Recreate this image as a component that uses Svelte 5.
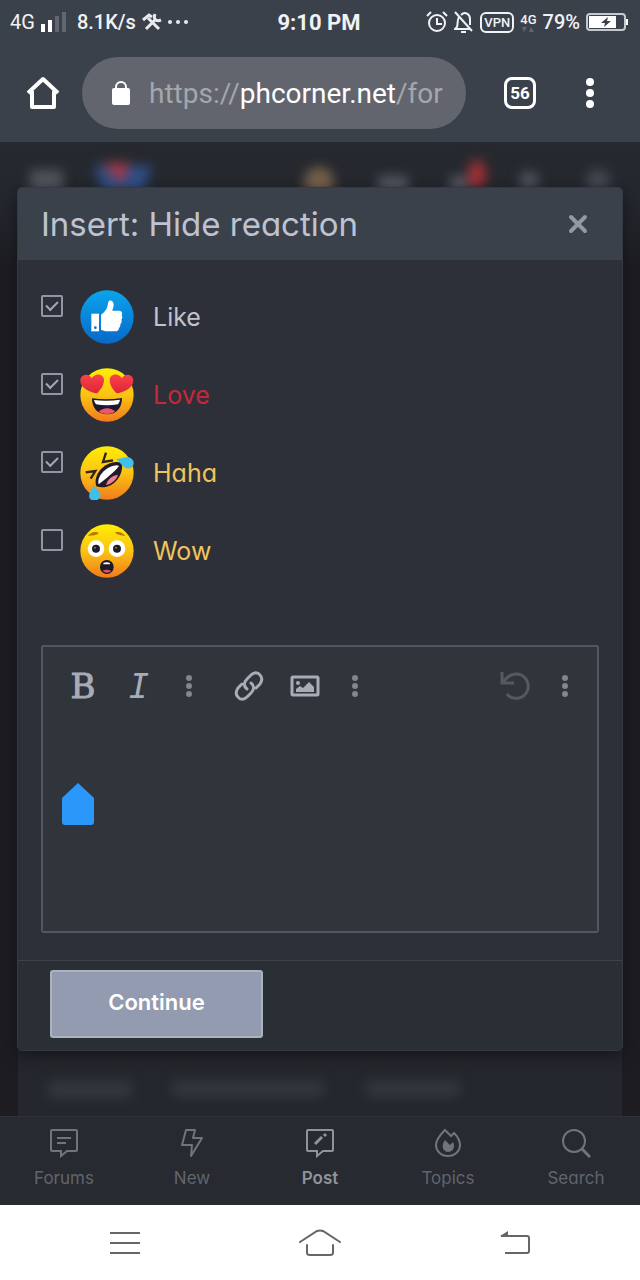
<script>
  let reactions = $state([
    { id: 'like', label: 'Like', checked: true },
    { id: 'love', label: 'Love', checked: true },
    { id: 'haha', label: 'Haha', checked: true },
    { id: 'wow', label: 'Wow', checked: false },
  ]);

  let message = $state('');

  const tabs = [
    { id: 'forums', label: 'Forums' },
    { id: 'new', label: 'New' },
    { id: 'post', label: 'Post', active: true },
    { id: 'topics', label: 'Topics' },
    { id: 'search', label: 'Search' },
  ];
</script>

{#snippet dots()}
  <svg width="8" height="24" viewBox="0 0 8 24" fill="currentColor">
    <circle cx="4" cy="4" r="3" />
    <circle cx="4" cy="12" r="3" />
    <circle cx="4" cy="20" r="3" />
  </svg>
{/snippet}

{#snippet face(id)}
  <svg class="face" viewBox="0 0 162 162" aria-hidden="true">
    {#if id === 'like'}
      <circle cx="81" cy="81" r="80" fill="url(#blue)" />
      <path d="M34 71h23v53H34z" fill="#fff" />
      <circle cx="46" cy="113" r="4" fill="#0b6fc4" />
      <path
        d="M63 74C71 69 79 60 82 51c2-7 1-14 5-18 6-4 14 2 14 11 0 7-3 12-4 18h20c8 0 12 7 8 14 3 5 2 10-1 13 2 5 1 10-3 13 1 5-1 9-4 12 0 7-5 10-12 10H82c-8 0-13-3-19-4z"
        fill="#fff"
      />
    {:else if id === 'love'}
      <circle cx="81" cy="81" r="80" fill="url(#yellow)" />
      <path d="M51 76C31 73 1 61 1 38c0-19 24-25 34-7 11-19 37-13 37 5 0 17-12 31-21 40z" fill="url(#red)" />
      <path d="M110 76c20-3 50-15 50-38 0-19-24-25-34-7-11-19-37-13-37 5 0 17 12 31 21 40z" fill="url(#red)" />
      <path d="M36 91q45 6 90-1c0 29-16 49-45 49s-45-19-45-48z" fill="#1d1b2a" />
      <path d="M42 96q39 5 78-1-1 9-6 14-34 6-66 0-5-6-6-13z" fill="#fff" />
      <path d="M57 131c10-14 39-14 48 0-14 9-35 9-48 0z" fill="#ee5575" />
    {:else if id === 'haha'}
      <circle cx="81" cy="81" r="80" fill="url(#yellow)" />
      <path d="M17 79l29-4-14 23M78 20l-9 28 30-5" fill="none" stroke="#32231f" stroke-width="7" />
      <path d="M49 121C36 82 82 38 125 50c9 40-32 86-76 71z" fill="#211b29" />
      <path d="M55 111c-2-25 27-52 57-53l5 2c-13 17-38 37-61 55z" fill="#fff" />
      <path d="M78 117c4-16 17-28 36-31-4 14-18 28-36 31z" fill="#f27b91" />
      <path d="M108 39c12 1 23-8 37-5 19 3 21 25 7 32-20 7-29-16-44-27z" fill="#42bfe8" />
      <path d="M40 116c-1 12-15 23-12 38 4 14 27 12 33-1 5-17-15-24-21-37z" fill="#42bfe8" />
    {:else}
      <circle cx="81" cy="81" r="80" fill="url(#yellow)" />
      <path d="M24 36c7-11 20-15 32-10-5 9-18 7-32 10zM105 25c13-4 25 1 31 12-13-5-25-2-31-12z" fill="#bd7300" />
      <circle cx="48" cy="74" r="25" fill="#fff" />
      <circle cx="111" cy="74" r="25" fill="#fff" />
      <circle cx="48" cy="74" r="12" fill="#1c1d27" />
      <circle cx="111" cy="74" r="12" fill="#1c1d27" />
      <circle cx="45" cy="71" r="3" fill="#777" />
      <circle cx="108" cy="71" r="3" fill="#777" />
      <rect x="60" y="108" width="41" height="42" rx="20" fill="#1b1925" />
      <path d="M70 117q10-5 20 0v4H70z" fill="#fff" />
      <path d="M67 141q13-8 27 0-12 10-27 0z" fill="#e84864" />
    {/if}
  </svg>
{/snippet}

<svg class="defs" width="0" height="0" aria-hidden="true">
  <defs>
    <linearGradient id="blue" x2="0" y2="1">
      <stop stop-color="#0ba4ed" />
      <stop offset="1" stop-color="#0868c8" />
    </linearGradient>
    <linearGradient id="yellow" x2="0" y2="1">
      <stop stop-color="#fdee05" />
      <stop offset=".5" stop-color="#fbc313" />
      <stop offset="1" stop-color="#f07b1c" />
    </linearGradient>
    <linearGradient id="red" x2="0" y2="1">
      <stop stop-color="#fa4448" />
      <stop offset="1" stop-color="#dd2437" />
    </linearGradient>
  </defs>
</svg>

<div class="screen">
  <div class="status">
    <div class="statusSide">
      <span class="network">4G</span>
      <svg width="26" height="20" viewBox="0 0 26 20" fill="#fff">
        <path d="M0 12h4v8H0zM7 8h4v12H7z" />
        <path d="M14 4h4v16h-4zM21 0h4v20h-4z" opacity=".2" />
      </svg>
      <span class="speed">8.1K/s</span>
      <svg width="20" height="18" viewBox="0 0 20 18" fill="none" stroke="#e8eaee">
        <path d="M6 5l11 11M13 7L4 16" stroke-width="3" />
        <path d="M1 7l6-5 3 2" stroke-width="3" />
        <path d="M13 1c-2 5 1 8 6 6" stroke-width="3" />
      </svg>
      <svg width="20" height="4" viewBox="0 0 20 4" fill="#e8eaee">
        <circle cx="2" cy="2" r="2" /><circle cx="10" cy="2" r="2" /><circle cx="18" cy="2" r="2" />
      </svg>
    </div>
    <time>9:10 PM</time>
    <div class="statusSide end">
      <svg width="22" height="22" viewBox="0 0 22 22" fill="none" stroke="#f0f2f5" stroke-width="2">
        <circle cx="11" cy="12" r="8" />
        <path d="M11 7v6h5M1 5l4-4M21 5l-4-4" />
      </svg>
      <svg width="20" height="22" viewBox="0 0 20 22" fill="none" stroke="#f0f2f5" stroke-width="2">
        <path d="M5 6c-2 3-1 7-2 10l-2 2h15M7 4c4-4 9-1 9 4v6M1 1l17 19" />
        <path d="M7 21h5" />
      </svg>
      <span class="vpn">VPN</span>
      <span class="data">
        4G
        <svg width="12" height="5" viewBox="0 0 12 5" fill="#616771"><path d="M0 0h5L2 5zM7 5h5L9 0z" /></svg>
      </span>
      <span class="percent">79%</span>
      <svg width="42" height="18" viewBox="0 0 42 18">
        <rect x="1" y="1" width="38" height="16" rx="3" fill="none" stroke="#c6cad0" stroke-width="2" />
        <path d="M3 3h27v12H3zM40 6h2v6h-2z" fill="#fff" />
        <path d="M22 4l-7 6h4l-1 4 7-6h-4z" fill="#3a404a" />
      </svg>
    </div>
  </div>

  <header class="browser">
    <button class="home" aria-label="Home">
      <svg width="34" height="34" viewBox="0 0 34 34" fill="none" stroke="#fff" stroke-width="4" stroke-linejoin="round">
        <path d="M2 17L17 3l15 14M6 15v16h22V15" />
      </svg>
    </button>
    <a class="address" href="#url">
      <svg width="18" height="24" viewBox="0 0 18 24">
        <rect y="7" width="18" height="17" rx="2" fill="#fff" />
        <path d="M4 8V6a5 5 0 0 1 10 0v2" fill="none" stroke="#fff" stroke-width="2" />
      </svg>
      <span class="url">https://<b>phcorner.net</b>/for</span>
    </a>
    <button class="count" aria-label="Open tabs">56</button>
    <button class="more" aria-label="Menu">
      <svg width="8" height="30" viewBox="0 0 8 30" fill="#fff">
        <circle cx="4" cy="4" r="4" /><circle cx="4" cy="15" r="4" /><circle cx="4" cy="26" r="4" />
      </svg>
    </button>
  </header>

  <main>
    <svg class="strip top" viewBox="0 0 640 46" preserveAspectRatio="none" aria-hidden="true">
      <g class="blurred">
        <rect x="30" y="28" width="33" height="24" fill="#50545b" />
        <path d="M94 24h58l-10 28h-38z" fill="#304f88" />
        <path d="M103 21h27l-9 22z" fill="#a93847" />
        <circle cx="319" cy="40" r="15" fill="#76604b" />
        <rect x="378" y="34" width="30" height="17" fill="#555763" />
        <rect x="450" y="34" width="18" height="17" fill="#555763" />
        <ellipse cx="477" cy="33" rx="9" ry="15" fill="#a22f36" />
        <circle cx="529" cy="39" r="10" fill="#50525d" />
        <circle cx="598" cy="39" r="12" fill="#444951" />
      </g>
    </svg>

    <div class="dialog" role="dialog" aria-labelledby="title">
      <div class="dialogHeader">
        <h1 id="title">Insert: Hide reaction</h1>
        <button class="close" aria-label="Close">
          <svg width="20" height="20" viewBox="0 0 20 20" stroke="currentColor" stroke-width="4" stroke-linecap="round">
            <path d="M3 3l14 14M17 3L3 17" />
          </svg>
        </button>
      </div>

      <div class="dialogBody">
        <ul class="reactions">
          {#each reactions as reaction (reaction.id)}
            <li>
              <label class={reaction.id}>
                <input type="checkbox" bind:checked={reaction.checked} />
                {@render face(reaction.id)}
                <span>{reaction.label}</span>
              </label>
            </li>
          {/each}
        </ul>

        <div class="editor">
          <div class="tools">
            <button class="bold" aria-label="Bold">B</button>
            <button class="italic" aria-label="Italic">I</button>
            <button class="narrow" aria-label="More text options">{@render dots()}</button>
            <button class="group" aria-label="Insert link">
              <svg width="30" height="30" viewBox="0 0 30 30" fill="none" stroke="currentColor" stroke-width="3" stroke-linecap="round">
                <path d="M13 18c-4-3-3-7 0-10l4-4c3-3 7-3 9 0 3 3 2 6 0 9l-4 4" />
                <path d="M17 12c4 3 3 7 0 10l-4 4c-3 3-7 3-9 0-3-3-2-6 0-9l4-4" />
              </svg>
            </button>
            <button aria-label="Insert image">
              <svg width="30" height="22" viewBox="0 0 30 22">
                <rect x="2" y="2" width="26" height="18" rx="1" fill="none" stroke="currentColor" stroke-width="3" />
                <circle cx="8" cy="8" r="2" fill="currentColor" />
                <path d="M6 17v-3l4-3 3 2 6-6 5 5v5z" fill="currentColor" />
              </svg>
            </button>
            <button class="narrow" aria-label="More insert options">{@render dots()}</button>
            <button class="undo" aria-label="Undo" disabled>
              <svg width="30" height="30" viewBox="0 0 30 30" fill="none" stroke="currentColor" stroke-width="3">
                <path d="M2 1v11h12M3 12C8 2 20 0 26 8c5 8 1 17-7 19-5 1-9 0-12-4" />
              </svg>
            </button>
            <button class="narrow" aria-label="More options">{@render dots()}</button>
          </div>
          <div class="writing">
            <textarea aria-label="Message" bind:value={message}></textarea>
            <svg class="handle" width="32" height="42" viewBox="0 0 32 42" aria-hidden="true">
              <path d="M16 0l16 15v24q0 3-3 3H3q-3 0-3-3V15z" fill="#2a98fb" />
            </svg>
          </div>
        </div>
      </div>

      <div class="dialogFooter">
        <button class="continue">Continue</button>
      </div>
    </div>

    <svg class="strip bottom" viewBox="0 0 640 66" preserveAspectRatio="none" aria-hidden="true">
      <rect x="18" y="0" width="604" height="66" fill="#24272d" />
      <g class="blurred" fill="#33373e">
        <rect x="48" y="31" width="84" height="17" />
        <rect x="172" y="31" width="152" height="16" />
        <rect x="366" y="31" width="94" height="16" />
      </g>
    </svg>
  </main>

  <nav class="tabs">
    {#each tabs as tab (tab.id)}
      <a href="#{tab.id}" class:active={tab.active}>
        <svg width="30" height="30" viewBox="0 0 30 30" fill="none" stroke="currentColor" stroke-width="2">
          {#if tab.id === 'forums'}
            <path d="M3 2h24q1 0 1 1v19q0 1-1 1h-9l-6 5v-5H3q-1 0-1-1V3q0-1 1-1zM8 10h14M8 15h9" />
          {:else if tab.id === 'new'}
            <path d="M9 2h9l-2 8h9L14 28l1-11H5z" stroke-linejoin="round" />
          {:else if tab.id === 'post'}
            <path d="M3 2h24q1 0 1 1v19q0 1-1 1h-9l-6 5v-5H3q-1 0-1-1V3q0-1 1-1z" />
            <path d="M10 16l7-7M19 8l2-2" stroke-width="3" />
          {:else if tab.id === 'topics'}
            <path d="M12 2l6 6 3-3c4 4 6 8 6 12 0 6-5 11-12 11S3 23 3 17c0-5 4-10 9-15z" />
            <path d="M12 12l5 5 3-3c3 6-1 10-5 10s-8-5-3-12z" fill="currentColor" stroke="none" />
          {:else}
            <circle cx="13" cy="13" r="11" /><path d="M21 21l8 8" stroke-width="3" />
          {/if}
        </svg>
        <span>{tab.label}</span>
      </a>
    {/each}
  </nav>

  <nav class="system">
    <button aria-label="Recent apps">
      <svg width="30" height="24" viewBox="0 0 30 24" stroke="#666" stroke-width="2"><path d="M0 2h30M0 12h30M0 22h30" /></svg>
    </button>
    <button aria-label="Home screen">
      <svg width="42" height="28" viewBox="0 0 42 28" fill="none" stroke="#666" stroke-width="2" stroke-linecap="round">
        <path d="M1 13L18 2q3-1 6 0l17 11M8 16v8q0 2 3 2h20q3 0 3-2v-8" />
      </svg>
    </button>
    <button aria-label="Back">
      <svg width="32" height="26" viewBox="0 0 32 26" fill="none" stroke="#666" stroke-width="2">
        <path d="M2 6h26q2 0 2 2v13q0 2-2 2H6" /><path d="M1 6l8-5v5z" fill="#666" stroke="none" />
      </svg>
    </button>
  </nav>
</div>

<style>
  :global(body) {
    background: #1c1d22;
  }

  .screen {
    display: flex;
    flex-direction: column;
    min-height: 100vh;
    font-family: Inter, "Open Sans", sans-serif;
    font-feature-settings: "cv11";
    color: #bec3cf;
  }

  .defs {
    position: absolute;
  }

  svg {
    display: block;
    flex: none;
  }

  button {
    display: flex;
    align-items: center;
    justify-content: center;
    border: 0;
    padding: 0;
    background: none;
    color: inherit;
    font: inherit;
  }

  a {
    color: inherit;
    text-decoration: none;
  }

  .status {
    display: grid;
    grid-template-columns: 1fr auto 1fr;
    align-items: center;
    height: 44px;
    padding: 0 12px 0 10px;
    background: #3b414b;
    color: #f0f2f5;
    font-family: Roboto, sans-serif;
    font-size: 20px;
    font-weight: 500;
  }

  .statusSide {
    display: flex;
    align-items: center;
    gap: 6px;
  }

  .end {
    justify-content: flex-end;
  }

  .network {
    font-weight: 400;
  }

  .speed {
    padding-left: 4px;
  }

  time {
    font-size: 22px;
    font-weight: 700;
  }

  .vpn {
    border: 2px solid #f0f2f5;
    border-radius: 6px;
    padding: 0 2px;
    font-size: 13px;
    line-height: 17px;
  }

  .data {
    font-size: 13px;
    line-height: 14px;
  }

  .data svg {
    margin-left: 2px;
  }

  .percent {
    font-size: 20px;
  }

  .browser {
    display: flex;
    align-items: center;
    height: 98px;
    padding: 0 30px 0 26px;
    background: #3b414b;
    font-family: Roboto, sans-serif;
  }

  .address {
    display: flex;
    flex: 1;
    align-items: center;
    gap: 19px;
    min-width: 0;
    height: 72px;
    margin: 0 38px 0 22px;
    padding: 0 18px 0 30px;
    border-radius: 36px;
    background: #62656e;
    color: #a4a7ae;
    font-size: 28px;
  }

  .url {
    overflow: hidden;
    white-space: nowrap;
  }

  .url b {
    color: #fff;
    font-weight: 400;
  }

  .count {
    width: 32px;
    height: 32px;
    border: 3px solid #fff;
    border-radius: 8px;
    color: #fff;
    font-size: 17px;
    font-weight: 700;
  }

  .more {
    width: 40px;
    height: 48px;
    margin-left: 34px;
  }

  main {
    display: flex;
    flex: 1;
    flex-direction: column;
    background: linear-gradient(#262a2f, #24272e 60px, #1c1c21 130px);
  }

  .strip {
    width: 100%;
  }

  .top {
    height: 46px;
  }

  .bottom {
    height: 66px;
  }

  .blurred {
    filter: blur(6px);
  }

  .dialog {
    display: flex;
    flex: 1;
    flex-direction: column;
    position: relative;
    margin: 0 18px;
    border-radius: 4px;
    background: #2d3038;
    box-shadow: 0 0 0 1px #363a41, 0 5px 15px #121417;
  }

  .dialogHeader {
    display: flex;
    align-items: center;
    justify-content: space-between;
    height: 72px;
    padding: 0 24px 0 23px;
    border-radius: 4px 4px 0 0;
    background: #3b414b;
  }

  h1 {
    margin: 0;
    font-size: 33px;
    font-weight: 400;
    line-height: 40px;
  }

  .close {
    width: 40px;
    height: 40px;
    color: #9398a3;
  }

  .dialogBody {
    display: flex;
    flex: 1;
    flex-direction: column;
    gap: 67px;
    padding: 30px 23px 27px;
  }

  .reactions {
    display: flex;
    flex-direction: column;
    gap: 24px;
    margin: 0;
    padding: 0;
    list-style: none;
  }

  label {
    display: flex;
    align-items: center;
    font-size: 25px;
  }

  .love {
    color: #c6283a;
  }

  .haha,
  .wow {
    color: #f0c45c;
  }

  .face {
    width: 54px;
    height: 54px;
    margin: 0 19px 0 17px;
  }

  input {
    position: relative;
    align-self: flex-start;
    appearance: none;
    width: 22px;
    height: 22px;
    margin: 5px 0 0;
    border: 2px solid #9295a5;
    border-radius: 2px;
  }

  input:checked::after {
    content: "";
    position: absolute;
    top: 4px;
    left: 3px;
    width: 10px;
    height: 5px;
    border: solid #a3a6b5;
    border-width: 0 0 2px 2px;
    transform: rotate(-45deg);
  }

  .editor {
    display: flex;
    flex: 1;
    flex-direction: column;
    border: 2px solid #515760;
    border-radius: 3px;
    background: #30343b;
  }

  .tools {
    display: flex;
    padding: 11px 10px 0 12px;
    color: #a8acb5;
  }

  .tools button {
    width: 56px;
    height: 56px;
  }

  .tools .narrow {
    width: 44px;
    color: #81858e;
  }

  .tools .group {
    margin-left: 10px;
  }

  .tools .undo {
    margin-left: auto;
    color: #555a62;
  }

  .bold {
    font-family: "DejaVu Serif", serif;
    font-size: 34px;
    -webkit-text-stroke: 1px currentColor;
  }

  .italic {
    font-family: "DejaVu Sans Mono", monospace;
    font-size: 34px;
    font-style: italic;
  }

  .writing {
    display: flex;
    flex: 1;
    position: relative;
  }

  textarea {
    flex: 1;
    min-width: 0;
    min-height: 140px;
    padding: 20px;
    border: 0;
    outline: 0;
    resize: none;
    background: none;
    color: inherit;
    font: inherit;
    font-size: 25px;
  }

  .handle {
    position: absolute;
    top: 69px;
    left: 19px;
  }

  .dialogFooter {
    padding: 9px 32px 12px;
    border-top: 1px solid #3f4349;
    background: #2a2e35;
    border-radius: 0 0 4px 4px;
  }

  .continue {
    width: 213px;
    height: 68px;
    padding-bottom: 4px;
    border: 2px solid #abb3bd;
    border-radius: 3px;
    background: #929bb0;
    color: #fff;
    font-size: 22px;
    font-weight: 600;
  }

  .tabs {
    display: flex;
    height: 88px;
    border-top: 1px solid #30343a;
    background: #272a30;
    color: #61656d;
  }

  .tabs a {
    display: flex;
    flex: 1;
    flex-direction: column;
    align-items: center;
    gap: 10px;
    padding-top: 11px;
    font-size: 17px;
    line-height: 20px;
  }

  .tabs svg {
    color: #70747c;
  }

  .tabs .active,
  .tabs .active svg {
    color: #8f939b;
  }

  .active span {
    font-weight: 600;
  }

  .system {
    display: flex;
    justify-content: center;
    height: 75px;
    background: #fff;
  }

  .system button {
    width: 31%;
    max-width: 195px;
  }
</style>
